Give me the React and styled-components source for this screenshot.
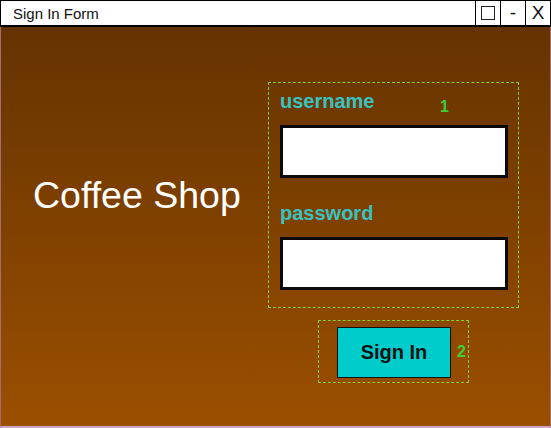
import React from 'react';
import styled, { createGlobalStyle } from 'styled-components';

const GlobalStyle = createGlobalStyle`
    body {
        margin: 0;
        font-family: 'Liberation Sans', Arial, sans-serif;
    }
`;

const App = () => {
    return (
        <>
            <GlobalStyle />
            <Window>
                <TitleBar>
                    <TitleText>Sign In Form</TitleText>
                    <Controls>
                        <ControlButton>
                            <MaxIcon />
                        </ControlButton>
                        <ControlButton>-</ControlButton>
                        <ControlButton>X</ControlButton>
                    </Controls>
                </TitleBar>
                <Body>
                    <Heading>Coffee Shop</Heading>
                    <FieldGroup>
                        <Marker top="16px" left="171px">1</Marker>
                        <Field>
                            <Label>username</Label>
                            <Input type="text" />
                        </Field>
                        <Field>
                            <Label>password</Label>
                            <Input type="password" />
                        </Field>
                    </FieldGroup>
                    <ButtonGroup>
                        <SignInButton>Sign In</SignInButton>
                        <Marker top="23px" left="138px">2</Marker>
                    </ButtonGroup>
                </Body>
            </Window>
        </>
    );
};

const Window = styled.div`
    width: 551px;
    height: 428px;
    display: flex;
    flex-direction: column;
    box-sizing: border-box;
`;

const TitleBar = styled.div`
    height: 27px;
    box-sizing: border-box;
    display: flex;
    align-items: stretch;
    justify-content: space-between;
    background: #fff;
    border: 1px solid #000;
    border-bottom-width: 2px;
`;

const TitleText = styled.div`
    display: flex;
    align-items: center;
    padding-left: 12px;
    font-size: 15px;
    color: #111;
`;

const Controls = styled.div`
    display: flex;
`;

const ControlButton = styled.div`
    width: 24px;
    display: flex;
    align-items: center;
    justify-content: center;
    border-left: 1px solid #000;
    font-size: 19px;
    color: #111;
`;

const MaxIcon = styled.span`
    width: 12px;
    height: 12px;
    border: 1px solid #222;
`;

const Body = styled.div`
    flex: 1;
    display: grid;
    grid-template-columns: 1fr auto;
    grid-template-rows: auto auto;
    align-content: start;
    row-gap: 12px;
    padding: 55px 31px 0 32px;
    background: linear-gradient(to bottom, #653300, #9b4f00);
    border-left: 1px solid #a66c72;
    border-right: 1px solid #a66c72;
    border-bottom: 2px solid #c7a6c6;
`;

const Heading = styled.h1`
    margin: 0;
    align-self: center;
    font-size: 37.5px;
    font-weight: 400;
    color: #fff;
`;

const FieldGroup = styled.div`
    position: relative;
    display: flex;
    flex-direction: column;
    gap: 24px;
    padding: 7px 10px 17px 11px;
    border: 1px dashed #86cf2c;
`;

const Field = styled.div`
    display: flex;
    flex-direction: column;
    gap: 12px;
`;

const Label = styled.label`
    font-size: 20px;
    font-weight: 700;
    color: #38c2c2;
    line-height: 23px;
`;

const Input = styled.input`
    width: 228px;
    height: 53px;
    box-sizing: border-box;
    border: 3px solid #0a0a0a;
    background: #fff;
    outline: none;
`;

const ButtonGroup = styled.div`
    grid-column: 2;
    justify-self: center;
    position: relative;
    padding: 6px 17px 4px 18px;
    border: 1px dashed #86cf2c;
`;

const SignInButton = styled.button`
    width: 114px;
    height: 51px;
    display: block;
    background: #00cccc;
    border: 1px solid #111;
    font-family: 'Liberation Sans', Arial, sans-serif;
    font-size: 20px;
    font-weight: 700;
    color: #111;
`;

const Marker = styled.span`
    position: absolute;
    top: ${(props) => props.top};
    left: ${(props) => props.left};
    font-size: 16px;
    font-weight: 700;
    line-height: 1;
    color: #3dd12e;
`;

export default App;
